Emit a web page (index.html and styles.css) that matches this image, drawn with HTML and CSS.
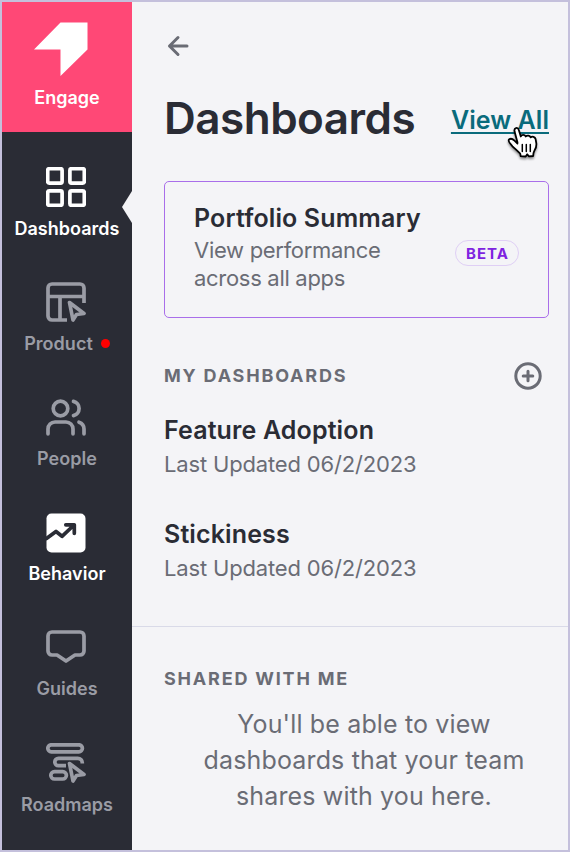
FILE: index.html
```html
<!DOCTYPE html>
<html lang="en">
<head>
  <meta charset="UTF-8">
  <title>Dashboards</title>
  <link rel="stylesheet" href="styles.css">
</head>
<body>
<div class="app">
  <nav class="sidebar">
    <a class="brand">
      <svg width="56" height="56" viewBox="0 0 56 56"><path d="M1 27.500 27.500 0.500H54.500V27.500L27.500 54V27.500Z" fill="#fff"/></svg>
      <span>Engage</span>
    </a>
    <ul class="nav">
      <li class="on current">
        <svg width="40" height="40" viewBox="0 0 40 40"><rect x="1.700" y="1.700" width="14.400" height="14.400" rx="1.500"/><rect x="23.900" y="1.700" width="14.400" height="14.400" rx="1.500"/><rect x="1.700" y="23.900" width="14.400" height="14.400" rx="1.500"/><rect x="23.900" y="23.900" width="14.400" height="14.400" rx="1.500"/></svg>
        <span>Dashboards</span>
      </li>
      <li>
        <svg width="40" height="40" viewBox="0 0 40 40"><path d="M38 21V6a4 4 0 0 0-4-4H6a4 4 0 0 0-4 4v28a4 4 0 0 0 4 4h15M2 14.500h36M14 14.500V38" stroke-linecap="butt"/><path d="M23.500 20.500 38 31.500 30.500 32.500 27 38Z"/></svg>
        <span>Product<i class="dot"></i></span>
      </li>
      <li>
        <svg width="40" height="40" viewBox="0 0 40 40"><circle cx="14.500" cy="10.500" r="7.300"/><path d="M27.500 3.400a7.300 7.300 0 0 1 0 14.200M2 35.800V31a7 7 0 0 1 7-7h11a7 7 0 0 1 7 7v4.800M33 24.200c3 1 5 3.600 5 6.800v4.800"/></svg>
        <span>People</span>
      </li>
      <li class="on">
        <svg width="40" height="40" viewBox="0 0 40 40"><rect class="fill" x=".5" y=".5" width="39" height="39" rx="5"/><path class="cut" d="M.5 25.500 10 18.500 16 23.300 27.500 12.500M19.800 11.800h8.500v8.500"/></svg>
        <span>Behavior</span>
      </li>
      <li>
        <svg width="40" height="40" viewBox="0 0 40 40"><path d="M6 4h28a4 4 0 0 1 4 4v15a4 4 0 0 1-4 4h-5l-9 6-9-6H6a4 4 0 0 1-4-4V8a4 4 0 0 1 4-4Z"/></svg>
        <span>Guides</span>
      </li>
      <li>
        <svg width="40" height="40" viewBox="0 0 40 40"><rect x="1.800" y="1.800" width="34.600" height="7" rx="3.500"/><path d="M36.300 20.500v-.7a4.500 4.500 0 0 0-4.500-4.500H12.500a3.700 3.700 0 0 0 0 7.400H20" stroke-linecap="butt"/><rect x="4.800" y="28.600" width="15.600" height="7.400" rx="3.700"/><path d="M23.500 20.500 38 31.500 30.500 32.500 27 38Z"/></svg>
        <span>Roadmaps</span>
      </li>
    </ul>
  </nav>
  <main class="panel">
    <section class="top">
      <svg class="back" width="22" height="22" viewBox="0 0 22 22"><path d="M20 11H2.500M11 2.500 2.500 11l8.500 8.500"/></svg>
      <header class="title">
        <h1>Dashboards</h1>
        <a class="view-all">View All
          <svg class="hand" width="32" height="34" viewBox="0 0 32 34"><path d="M8.500 16.500 5.500 5.300C4.800 1.500 8.800.8 9.800 4l2 6.500c.8-2.200 3.900-2.200 4.900 0 1.400-1.600 4.200-1.100 5 .8 1.600-1.400 4.300-.5 4.900 1.800l.7 4c.3 3-.3 5.400-1.800 7.400l-1 2.500-.3 3-4.200.3-1.800-2-1.500 2.200-5-.3-.5-2.500C8.500 25 5.500 22.300 3.500 20.300 1.800 18.500-1.500 15 0 13.500c1.800-1.500 4.200-.2 5.500 1.100l3 3"/><path class="lines" d="M13.300 18.500v7M17.300 18.500v7M21.300 18.500v7"/></svg>
        </a>
      </header>
      <div class="card">
        <div>
          <h2>Portfolio Summary</h2>
          <p>View performance<br>across all apps</p>
        </div>
        <span class="beta">BETA</span>
      </div>
      <div class="section-head">
        <h3>MY DASHBOARDS</h3>
        <svg class="add" width="28" height="28" viewBox="0 0 28 28"><circle cx="14" cy="14" r="12.200"/><path d="M14 9.200v9.600M9.200 14h9.600"/></svg>
      </div>
      <div class="item">
        <h2>Feature Adoption</h2>
        <p>Last Updated 06/2/2023</p>
      </div>
      <div class="item">
        <h2>Stickiness</h2>
        <p>Last Updated 06/2/2023</p>
      </div>
    </section>
    <section class="shared">
      <h3>SHARED WITH ME</h3>
      <p>You'll be able to view<br>dashboards that your team<br>shares with you here.</p>
    </section>
  </main>
</div>
</body>
</html>
```
FILE: styles.css
```css
* {
  box-sizing: border-box;
  margin: 0;
  padding: 0;
}

body {
  font-family: Inter, "Liberation Sans", sans-serif;
  color: #2a2c35;
}

svg {
  display: block;
  fill: none;
  stroke-linecap: round;
  stroke-linejoin: round;
}

.app {
  display: flex;
  width: 570px;
  height: 852px;
  border: 2px solid #c4c0dc;
  background: #f4f4f7;
}

.sidebar {
  width: 130px;
  background: #2a2c35;
  font-size: 18px;
  font-weight: 600;
  line-height: 24px;
  letter-spacing: 0.02px;
}

.brand {
  display: flex;
  flex-direction: column;
  align-items: center;
  height: 130px;
  padding-top: 20px;
  gap: 8px;
  background: #ff4876;
  color: #fff;
}

.brand svg {
  margin-right: 12px;
}

.nav {
  list-style: none;
  padding-top: 35.3px;
}

.nav li {
  position: relative;
  display: flex;
  flex-direction: column;
  align-items: center;
  gap: 9.5px;
  height: 115.15px;
  color: #9a9ca5;
}

.nav li.on {
  color: #fff;
}

.nav svg {
  margin-right: 2px;
  stroke: currentColor;
  stroke-width: 3.7;
}

.nav .fill {
  fill: currentColor;
  stroke: none;
}

.nav .cut {
  stroke: #2a2c35;
}

.current::after {
  content: "";
  position: absolute;
  right: 0;
  top: 23.7px;
  border: 16px solid transparent;
  border-left: 0;
  border-right: 10px solid #f4f4f7;
}

.dot {
  display: inline-block;
  width: 9px;
  height: 9px;
  margin-left: 8px;
  border-radius: 50%;
  background: #f00;
  vertical-align: 2px;
}

.panel {
  flex: 1;
}

.top {
  height: 625px;
  padding: 32.5px 19px 0 32px;
  border-bottom: 1px solid #d9dae8;
}

.back {
  margin-left: 3px;
  stroke: #6a6c75;
  stroke-width: 3;
}

.title {
  display: flex;
  justify-content: space-between;
  margin-top: 34.5px;
}

h1 {
  font-size: 44px;
  font-weight: 600;
  line-height: 54px;
  letter-spacing: -0.5px;
}

.view-all {
  position: relative;
  padding-top: 14px;
  font-size: 25px;
  font-weight: 600;
  line-height: 30px;
  letter-spacing: 0.05px;
  color: #0a6b7c;
  text-decoration: underline;
  text-decoration-thickness: 2px;
  text-decoration-skip-ink: none;
  text-underline-offset: 3px;
}

.hand {
  position: absolute;
  left: 58px;
  top: 35px;
  overflow: visible;
  fill: #fff;
  stroke: #000;
  stroke-width: 1.8;
  filter: drop-shadow(0 2px 1px rgba(0, 0, 0, 0.4));
}

.hand .lines {
  stroke-width: 1.5;
}

.card {
  display: flex;
  justify-content: space-between;
  height: 137px;
  margin-top: 36px;
  padding: 20px 29px 0;
  border: 1px solid #a96eea;
  border-radius: 5px;
}

h2 {
  font-size: 25px;
  font-weight: 600;
  line-height: 32px;
  letter-spacing: 0.13px;
}

p {
  font-size: 22px;
  line-height: 28px;
  letter-spacing: -0.16px;
  color: #6a6c75;
}

.card p {
  margin-top: 2px;
  letter-spacing: -0.3px;
}

.beta {
  height: 26px;
  margin-top: 38px;
  padding: 1px 9px 0 10px;
  border: 1px solid #dfcff5;
  border-radius: 13px;
  font-size: 15px;
  font-weight: 700;
  line-height: 24px;
  letter-spacing: 1px;
  color: #7f24e0;
}

.section-head {
  display: flex;
  justify-content: space-between;
  align-items: center;
  margin-top: 44px;
  padding-right: 7.5px;
}

h3 {
  font-size: 18px;
  font-weight: 700;
  line-height: 24px;
  letter-spacing: 1.8px;
  color: #6a6c75;
}

.add {
  stroke: #6a6c75;
  stroke-width: 3;
}

.item {
  height: 104px;
  padding-top: 24px;
}

.item p {
  margin-top: 4px;
}

.shared {
  padding: 40px 19px 0 32px;
}

.shared p {
  margin-top: 15px;
  padding-left: 15px;
  font-size: 25px;
  line-height: 36px;
  letter-spacing: 0.15px;
  text-align: center;
}
```
